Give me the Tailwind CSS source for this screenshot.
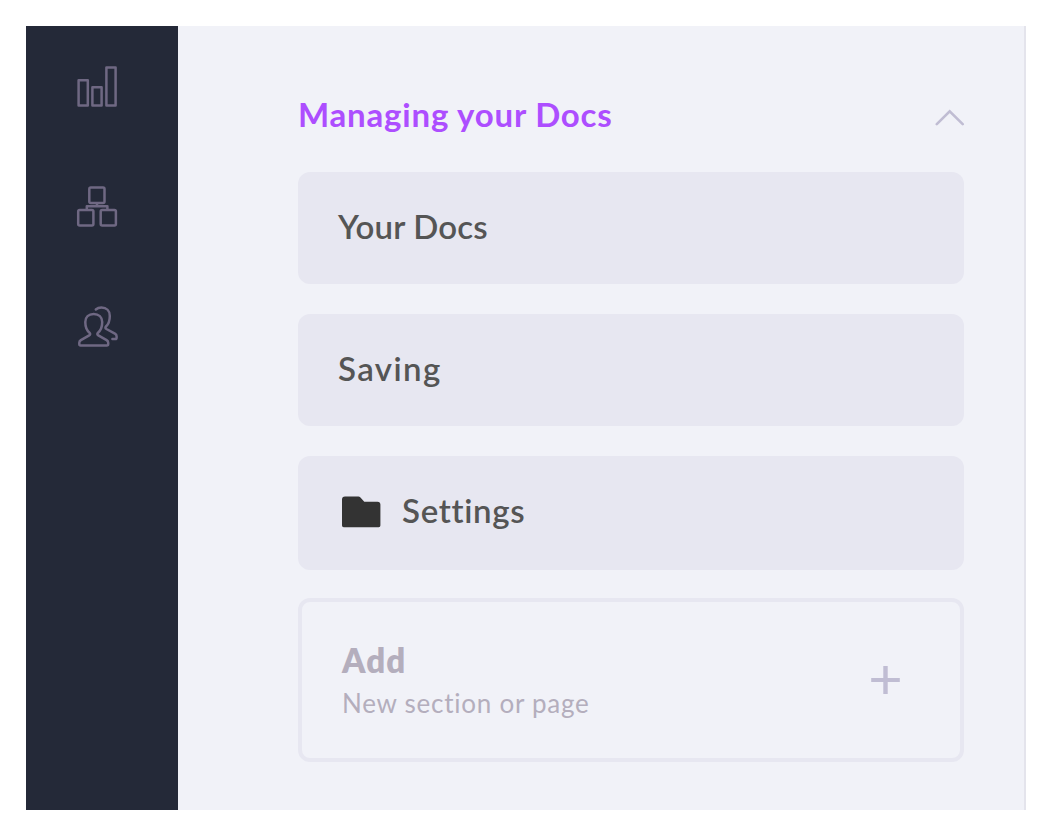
<!DOCTYPE html>
<html lang="en">
<head>
<meta charset="utf-8">
<title>Managing your Docs</title>
<script src="https://cdn.jsdelivr.net/npm/@tailwindcss/browser@4"></script>
</head>
<body class="bg-white p-[26px] pb-7 h-[838px] overflow-hidden font-['Lato','Open_Sans',sans-serif]">
<div class="flex w-[1000px] h-[784px]">
  <nav class="w-[152px] shrink-0 bg-[#242938] pt-[37px] pl-[47px] flex flex-col gap-[72px] text-[#6f6883]">
    <svg class="size-12 shrink-0" viewBox="0 0 48 48" fill="none" stroke="currentColor" stroke-width="2.5" stroke-linejoin="round">
      <rect x="5.6" y="17.2" width="9.2" height="25.2"/>
      <rect x="19.4" y="24.2" width="9.2" height="18.2"/>
      <rect x="33.4" y="4.4" width="9.2" height="38"/>
    </svg>
    <svg class="size-12 shrink-0" viewBox="0 0 48 48" fill="none" stroke="currentColor" stroke-width="2.5" stroke-linejoin="round">
      <rect x="16.3" y="4.5" width="15.2" height="15.4" rx="1.5"/>
      <rect x="5.2" y="27" width="15.2" height="15.4" rx="1.5"/>
      <rect x="27.7" y="27" width="15.2" height="15.4" rx="1.5"/>
      <path d="M24 20v3.2M13.8 26.5v-3.3h20.600v3.3"/>
    </svg>
    <svg class="size-12 shrink-0" viewBox="0 0 48 48" fill="none" stroke="currentColor" stroke-width="2.5" stroke-linejoin="round" stroke-linecap="round">
      <path d="M20.7 10.900c-5 0-8.400 3.200-8.400 8.100 0 4.800 1.400 8.400 4.200 10.700 1 .9.900 1.900-.3 2.600l-8.300 4.800c-1.100.7-1.600 1.400-1.600 2.600v1.300c0 .9.400 1.400 1.300 1.400h26.200c.9 0 1.400-.5 1.400-1.400v-1.300c0-1.200-.5-1.900-1.600-2.600l-8.300-4.800c-1.200-.7-1.300-1.700-.3-2.600 2.800-2.300 4.200-5.900 4.200-10.700 0-4.900-3.500-8.100-8.500-8.100z"/>
      <path d="M22.800 6.500c1.500-1.300 3.300-1.900 5.600-1.900 5.200 0 8.400 3.300 8.400 8.300 0 4.800-1.300 8.100-3.800 10.600-.9.900-.8 1.800.4 2.500l8.500 4.700c1.200.7 1.700 1.400 1.700 2.600v1.400c0 .9-.4 1.300-1.300 1.300h-2.900"/>
    </svg>
  </nav>
  <main class="flex-1 bg-[#f1f2f8] border-r-2 border-[#e4e4ec] pl-[120px] pr-[60px] pt-[68px]">
    <header class="flex items-start justify-between h-[78px]">
      <h1 class="text-[33px] leading-[40px] font-bold tracking-[0.8px] text-[#ad4eff] whitespace-nowrap">Managing your Docs</h1>
      <svg class="w-[30px] h-[18px] mt-[15px] -mr-px" viewBox="0 0 30 18" fill="none" stroke="#c0bdd3" stroke-width="2.600" stroke-linecap="round" stroke-linejoin="miter"><path d="M1.800 15.200L14.700 2.300L27.700 15.200"/></svg>
    </header>
    <div class="flex flex-col gap-[30px] text-[33px] leading-[40px] font-semibold text-[#555555]">
      <div class="h-28 rounded-xl bg-[#e7e7f1] pl-10 pt-[34px]"><span class="tracking-[0.15px]">Your Docs</span></div>
      <div class="h-28 rounded-xl bg-[#e7e7f1] pl-10 pt-[34px]"><span class="tracking-[1.4px]">Saving</span></div>
      <div class="h-[114px] rounded-xl bg-[#e7e7f1] pl-11 pt-[34px] flex items-start gap-[21px]">
        <svg class="w-[39px] h-[32px] mt-[6px]" viewBox="0 0 39 32" fill="#333333"><path d="M3 .6H16.500Q17.500.6 18.200 1.300L22.300 5.700H35.500Q38.400 5.700 38.400 8.600V29.600Q38.400 31.300 36.700 31.300H1.700Q0 31.300 0 29.600V3.600Q0 .6 3 .6Z"/></svg>
        <span class="tracking-[0.7px]">Settings</span>
      </div>
    </div>
    <div class="mt-7 h-[164px] rounded-xl border-4 border-[#e7e7f1] pl-10 pr-[60px] pt-[38px] flex items-start justify-between text-[#b4aebd]">
      <div>
        <div class="text-[33px] leading-[40px] font-extrabold"><span class="tracking-[1.1px]">Add</span></div>
        <div class="text-[26px] leading-[32px] mt-[7px]"><span class="tracking-[0.75px]">New section or page</span></div>
      </div>
      <svg class="w-[29px] h-[28px] mt-[26px]" viewBox="0 0 29 28" fill="#c0bdd3"><path d="M12.300 0h4.400v12h12.100v4H16.700v12h-4.400V16H.2v-4h12.100z"/></svg>
    </div>
  </main>
</div>
</body>
</html>
